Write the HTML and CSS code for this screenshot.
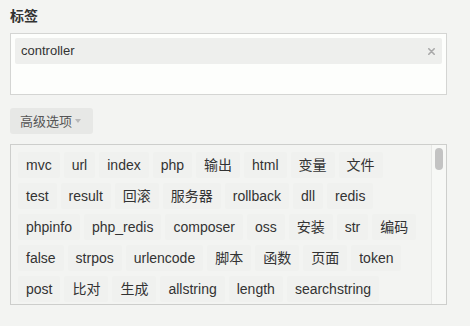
FILE: index.html
```html
<!DOCTYPE html>
<html lang="zh">
<head>
<meta charset="utf-8">
<title>标签</title>
<link rel="stylesheet" href="styles.css">
</head>
<body>
<div class="page">
  <div class="label">标签</div>
  <div class="input-box">
    <div class="chosen">
      <span class="chosen-text">controller</span>
      <svg class="chosen-x" width="7" height="7" viewBox="0 0 7 7"><path d="M0.8 0.8 L6.2 6.2 M6.2 0.8 L0.8 6.2" stroke="#a9a9a9" stroke-width="1.6" stroke-linecap="round"/></svg>
    </div>
  </div>
  <div class="adv-row">
    <button class="adv-btn">高级选项<span class="caret"></span></button>
  </div>
  <div class="tag-box">
    <div class="tag-list">
      <span class="tag">mvc</span><span class="tag">url</span><span class="tag">index</span><span class="tag">php</span><span class="tag">输出</span><span class="tag">html</span><span class="tag">变量</span><span class="tag">文件</span>
      <span class="tag">test</span><span class="tag">result</span><span class="tag">回滚</span><span class="tag">服务器</span><span class="tag">rollback</span><span class="tag">dll</span><span class="tag">redis</span>
      <span class="tag">phpinfo</span><span class="tag">php_redis</span><span class="tag">composer</span><span class="tag">oss</span><span class="tag">安装</span><span class="tag">str</span><span class="tag">编码</span>
      <span class="tag">false</span><span class="tag">strpos</span><span class="tag">urlencode</span><span class="tag">脚本</span><span class="tag">函数</span><span class="tag">页面</span><span class="tag">token</span>
      <span class="tag">post</span><span class="tag">比对</span><span class="tag">生成</span><span class="tag">allstring</span><span class="tag">length</span><span class="tag">searchstring</span>
    </div>
    <div class="scrollbar"><div class="thumb"></div></div>
  </div>
</div>
</body>
</html>
```
FILE: styles.css
```css
html, body {
  margin: 0;
  padding: 0;
  background: #f3f4f2;
}
body {
  font-family: "Liberation Sans", "Noto Sans CJK SC", sans-serif;
  color: #333;
}
.page {
  padding: 6px 23px 0 10px;
}
.label {
  font-size: 14px;
  font-weight: bold;
  line-height: 20px;
  height: 20px;
  color: #333;
  margin-bottom: 7px;
}
.input-box {
  border: 1px solid #d4d5d3;
  background: #fdfefc;
  padding: 4px;
  box-sizing: border-box;
  height: 62px;
}
.chosen {
  display: flex;
  align-items: center;
  justify-content: space-between;
  height: 26px;
  background: #eeefed;
  border-radius: 2px;
  padding: 0 7px 0 6px;
}
.chosen-text {
  font-size: 13px;
  color: #333;
  line-height: 26px;
}
.chosen-x {
  display: block;
}
.adv-row {
  margin-top: 13px;
  display: flex;
}
.adv-btn {
  display: flex;
  align-items: center;
  height: 26px;
  width: 83px;
  padding: 0 0 1px 10px;
  border: 0;
  border-radius: 3px;
  background: #e7e8e6;
  color: #555;
  font-family: "Liberation Sans", "Noto Sans CJK SC", sans-serif;
  font-size: 13px;
  box-sizing: border-box;
}
.caret {
  display: inline-block;
  width: 0;
  height: 0;
  margin-left: 3px;
  margin-top: 1px;
  border-left: 3px solid transparent;
  border-right: 3px solid transparent;
  border-top: 4px solid #b9b9b9;
}
.tag-box {
  margin-top: 10px;
  height: 161px;
  box-sizing: border-box;
  border: 1px solid #cdcecc;
  background: #f3f4f2;
  display: flex;
}
.tag-list {
  flex: 1;
  overflow: hidden;
  padding: 7px 7px 0 7px;
  display: flex;
  flex-wrap: wrap;
  align-content: flex-start;
  gap: 5px 4px;
}
.tag {
  height: 26px;
  line-height: 26px;
  padding: 0 8px;
  font-size: 14px;
  color: #333;
  background: #f0f1ef;
  border-radius: 2px;
  white-space: nowrap;
}
.scrollbar {
  border-left: 1px solid #e6e7e5;
  background: #f7f8f6;
  padding: 3px 0 0 3px;
  box-sizing: border-box;
  width: 15px;
}
.thumb {
  width: 8px;
  height: 22px;
  border-radius: 4px;
  background: #c3c3c3;
}
```
